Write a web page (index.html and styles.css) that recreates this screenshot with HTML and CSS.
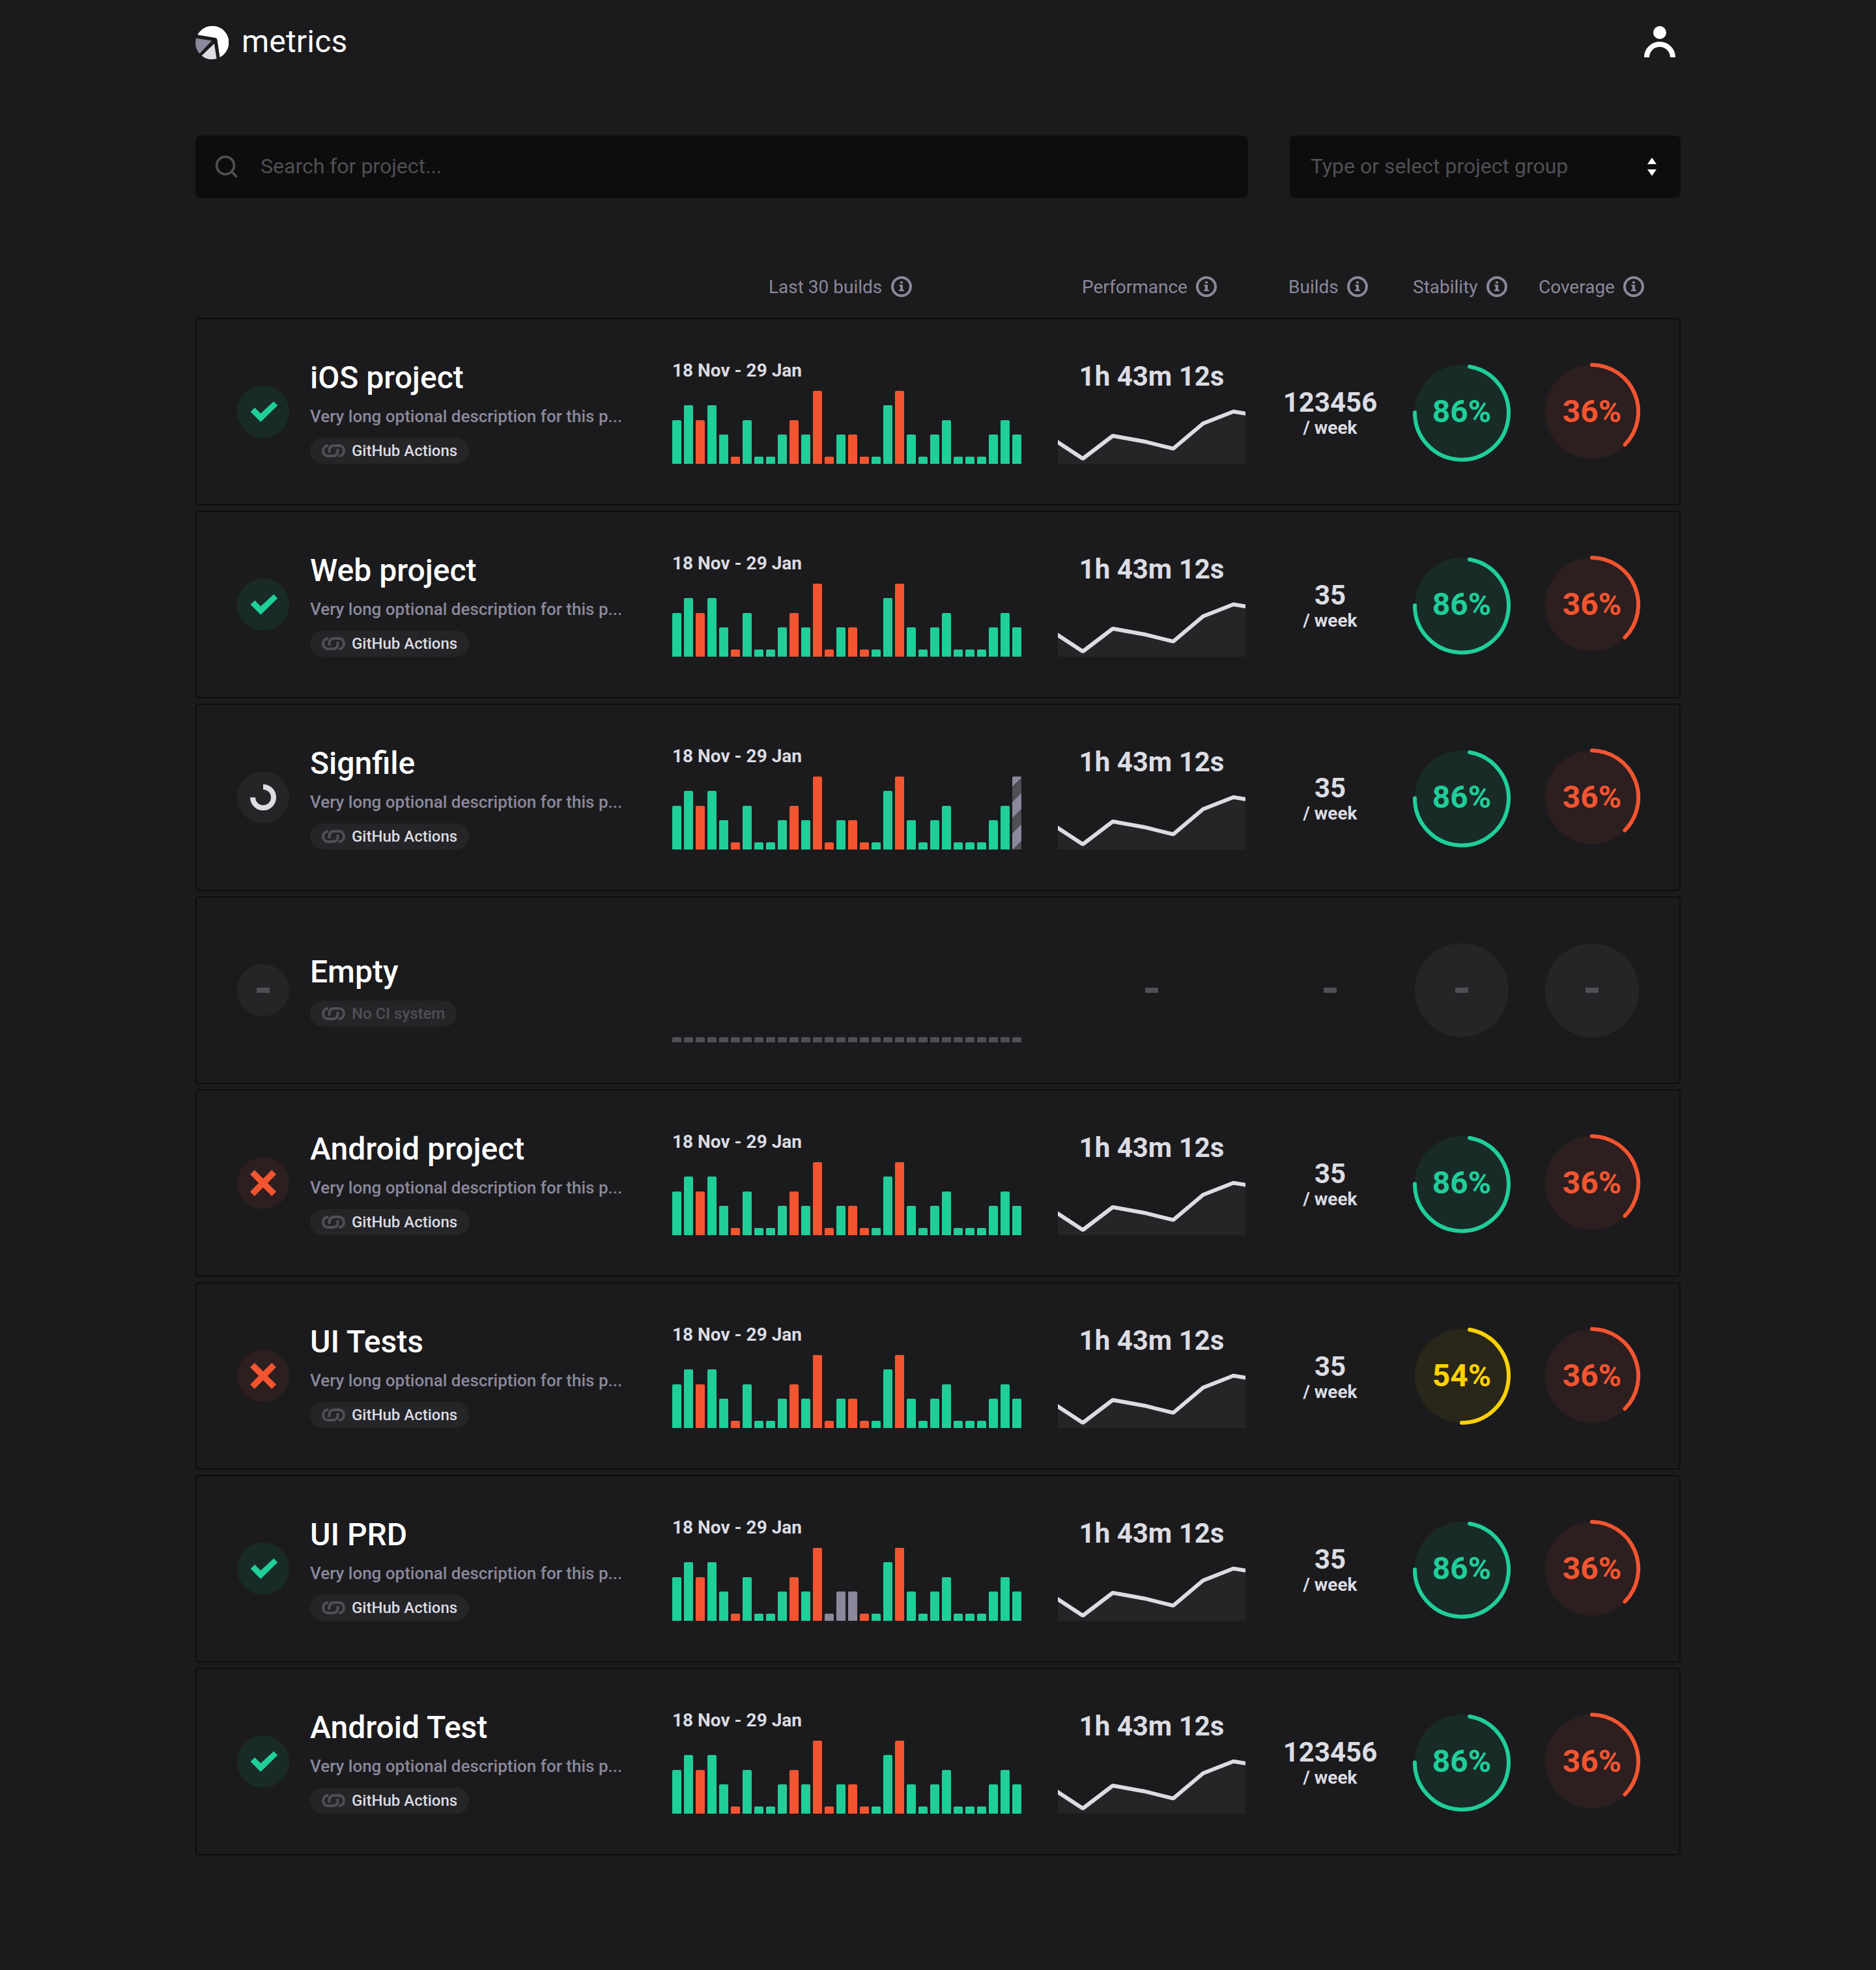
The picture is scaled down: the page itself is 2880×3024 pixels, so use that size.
FILE: index.html
```html
<!DOCTYPE html>
<html lang="en">
<head>
<meta charset="utf-8">
<title>metrics</title>
<link rel="stylesheet" href="styles.css">
</head>
<body>
<svg class="sprite" aria-hidden="true">
  <symbol id="info" viewBox="-16 -16 32 32">
    <circle r="14" fill="none" stroke="currentColor" stroke-width="4"/>
    <path fill="currentColor" d="M-2-8H2V-5H-2ZM-3.6-3H2V4.7H4V7H-4V4.7H-2V-.7H-3.6Z"/>
  </symbol>
  <symbol id="link" viewBox="0 0 36 20">
    <g fill="none" stroke="currentColor" stroke-width="4">
      <path d="M10 2C5 2 2 5.5 2 10S5 18 10 18H16.500C21.500 18 24.500 15.500 24.500 10.500V7"/>
      <path d="M26 18C31 18 34 14.500 34 10S31 2 26 2H19.500C14.500 2 11.500 4.500 11.500 9.500V13"/>
    </g>
  </symbol>
  <symbol id="success" viewBox="0 0 80 80">
    <path fill="currentColor" d="M20.600 40 27.200 33.700 36.200 42.800 56.200 24.300 62.200 30.300 36.200 55.700Z"/>
  </symbol>
  <symbol id="failure" viewBox="0 0 80 80">
    <path fill="none" stroke="currentColor" stroke-width="9.600" d="M23.400 23.400 56.600 56.600M56.600 23.400 23.400 56.600"/>
  </symbol>
  <symbol id="running" viewBox="0 0 80 80">
    <path fill="none" stroke="currentColor" stroke-width="8" d="M40 24A16 16 0 1 1 24 40"/>
  </symbol>
  <symbol id="spark" viewBox="0 0 288 96">
    <path class="spark-area" d="M0 63 38.300 88 84.300 53 132.700 61.700 177 72.700 223 34 269.500 15.700 288 18.700V96H0Z"/>
    <path class="spark-line" d="M-6 59 38.300 88 84.300 53 132.700 61.700 177 72.700 223 34 269.500 15.700 294 19.700"/>
  </symbol>
</svg>

<div class="page">
  <header class="topbar">
    <div class="brand">
      <svg class="logo" viewBox="0 0 51.200 51.200">
        <path fill="#fff" d="M3.300 13.600A25.600 25.600 0 1 1 37.600 48.200L33.600 20.900Q33.200 18.400 30.700 18Z"/>
        <path fill="#8b889b" d="M1.100 18.900 25.200 22.600 6.500 42.500A25.600 25.600 0 0 1 1.100 18.900Z"/>
        <path fill="#dcdce3" d="M29 27 32.600 50.200A25.600 25.600 0 0 1 9.600 45.800Z"/>
      </svg>
      <span class="brand-name">metrics</span>
    </div>
    <svg class="user" viewBox="0 0 48 48">
      <circle cx="24" cy="10" r="10" fill="#fff"/>
      <path d="M4 48A20 20 0 0 1 44 48" fill="none" stroke="#fff" stroke-width="8"/>
    </svg>
  </header>

  <div class="filters">
    <div class="search">
      <svg class="search-icon" viewBox="0 0 36 36">
        <g fill="none" stroke="currentColor" stroke-width="3.800"><circle cx="16" cy="16" r="13.400"/><path d="M25.500 25.500 34 34"/></g>
      </svg>
      <span>Search for project...</span>
    </div>
    <div class="select">
      <span>Type or select project group</span>
      <svg class="arrows" viewBox="0 0 14 28"><path fill="#fff" d="M0 10 7 0 14 10ZM0 18H14L7 28Z"/></svg>
    </div>
  </div>

  <div class="columns">
    <div class="col col-results"><span>Last 30 builds</span><svg><use href="#info"/></svg></div>
    <div class="col col-perf"><span>Performance</span><svg><use href="#info"/></svg></div>
    <div class="col col-builds"><span>Builds</span><svg><use href="#info"/></svg></div>
    <div class="col col-stability"><span>Stability</span><svg><use href="#info"/></svg></div>
    <div class="col col-coverage"><span>Coverage</span><svg><use href="#info"/></svg></div>
  </div>

  <main class="projects" id="projects"></main>
</div>
<script src="app.js"></script>
</body>
</html>
```
FILE: styles.css
```css
* { box-sizing: border-box; }

body {
  margin: 0;
  background: #1b1b1d;
  color: #dcdce3;
  font-family: Roboto, sans-serif;
}

svg { display: block; }
.sprite { position: absolute; width: 0; height: 0; }

.page {
  width: 2280px;
  height: 3024px;
  margin: 0 auto;
  padding-top: 40px;
}

.topbar {
  display: flex;
  justify-content: space-between;
  align-items: flex-start;
  height: 168px;
  padding-right: 8px;
}
.brand { display: flex; gap: 20px; }
.logo { width: 51px; height: 51px; }
.brand-name {
  color: #fff;
  font-size: 48px;
  line-height: 56px;
  letter-spacing: .2px;
  margin-top: -4px;
}
.user { width: 48px; height: 48px; }

.filters {
  display: grid;
  grid-template-columns: 1616px 600px;
  gap: 64px;
  font-size: 32px;
  color: #4f4f55;
}
.search, .select {
  display: flex;
  align-items: center;
  height: 96px;
  padding-bottom: 2px;
  border-radius: 8px;
  background: #0d0d0d;
}
.search { padding-left: 30px; gap: 34px; }
.search-icon { width: 36px; height: 36px; margin-top: 2px; }
.select { justify-content: space-between; padding: 0 37px 2px 32px; }
.arrows { width: 14px; height: 28px; margin-top: 2px; }

.columns {
  display: flex;
  height: 184px;
  padding: 120px 0 0 880px;
  font-size: 28px;
  line-height: 32px;
  color: #8b889b;
}
.col { display: flex; justify-content: space-between; }
.col span { padding-top: 1px; }
.col svg { width: 32px; height: 32px; }
.col-results { width: 220px; margin-right: 261px; }
.col-perf { width: 207px; margin-right: 110px; }
.col-builds { width: 122px; margin-right: 69px; }
.col-stability { width: 145px; margin-right: 48px; }
.col-coverage { width: 162px; }

.projects { display: grid; gap: 8px; }
.project {
  display: grid;
  grid-template-columns: 112px 556px 592px 288px 260px 200px 144px;
  align-items: center;
  height: 288px;
  padding: 0 62px;
  border: 2px solid #0d0d0d;
  border-radius: 5px;
}

.status {
  display: grid;
  place-items: center;
  width: 80px;
  height: 80px;
  border-radius: 50%;
  background: #252528;
}
.status svg { width: 80px; height: 80px; }
.status-success { background: #192b27; color: #20ce9a; }
.status-failure { background: #2d1e1f; color: #f45531; }
.status-running { color: #dcdce3; }

.dash { width: 20px; height: 8px; background: #4f4f55; }

.info {
  display: flex;
  flex-direction: column;
  align-items: flex-start;
  gap: 16px;
  white-space: nowrap;
}
.title {
  margin: 0;
  color: #fff;
  font-size: 48px;
  font-weight: 500;
  line-height: 56px;
}
.description {
  margin: 0;
  padding-bottom: 2px;
  color: #8b889b;
  font-size: 26px;
  font-weight: 500;
  line-height: 30px;
}
.chip {
  display: flex;
  align-items: center;
  gap: 10px;
  height: 40px;
  padding: 0 18px;
  border-radius: 20px;
  background: #252528;
  font-size: 24px;
  font-weight: 500;
}
.chip svg { width: 36px; height: 20px; color: #4f4f55; }
.chip-empty { color: #4f4f55; }

.results, .performance {
  display: flex;
  flex-direction: column;
  justify-content: space-between;
  height: 160px;
}
.range { font-size: 28px; font-weight: 700; line-height: 32px; padding-top: 1px; }
.bars { display: flex; align-items: flex-end; gap: 4px; height: 112px; margin-top: auto; }
.bar { width: 14px; border-radius: 2px 2px 0 0; }
.bar-g { background: #20ce9a; }
.bar-r { background: #f45531; }
.bar-c { background: #8b889b; }
.bar-e { background: #4f4f55; }
.bar-p {
  background: repeating-linear-gradient(135deg, #8b889b 0 10.900px, #4f4f55 10.900px 28px, #8b889b 28px 34.200px);
}

.duration {
  font-size: 42px;
  font-weight: 700;
  line-height: 52px;
  text-align: center;
  white-space: nowrap;
}
.spark { width: 288px; height: 96px; margin-top: auto; }
.spark-area { fill: #252528; }
.spark-line { fill: none; stroke: #dcdce3; stroke-width: 6; stroke-linejoin: bevel; }
.performance .dash, .frequency .dash { margin: auto; }

.frequency { text-align: center; font-weight: 700; }
.count { font-size: 42px; line-height: 47px; padding-top: 3px; }
.unit { font-size: 28px; line-height: 32px; }

.score {
  display: grid;
  place-items: center;
  width: 144px;
  height: 144px;
  border-radius: 50%;
  background: #252528;
  font-size: 48px;
  font-weight: 700;
}
.score > * { grid-area: 1 / 1; }
.score span { padding-bottom: 2px; }
.ring {
  width: 144px;
  height: 144px;
  overflow: visible;
  fill: none;
  stroke: currentColor;
  stroke-width: 6;
  stroke-linecap: round;
}
.score-good { background: #192b27; color: #20ce9a; }
.score-fair { background: #29261a; color: #ffd200; }
.score-bad { background: #2d1e1f; color: #f45531; }
```
FILE: app.js
```js
const LEVELS = { 1: 11.2, 4: 44.8, 6: 67.2, 8: 89.6, 9: 112, 0: 8 };
const BUILDS = 'g6 g8 r6 g8 g4 r1 g6 g1 g1 g4 r6 g4 r9 r1 g4 r4 r1 g1 g8 r9 g4 g1 g4 g6 g1 g1 g1 g4 g6 g4'.split(' ');
const NO_BUILDS = Array(30).fill('e0');

const RINGS = {
  good: 'M12 -69.300A72 72 0 1 1 -72 1.300',
  fair: 'M12 -71A72 72 0 0 1 0 72',
  bad: 'M0 -72A72 72 0 0 1 50.500 50.500'
};

const withBuilds = (changes) => Object.assign([...BUILDS], changes);

const projects = [
  { name: 'iOS project', status: 'success', count: '123456' },
  { name: 'Web project', status: 'success', count: '35' },
  { name: 'Signfile', status: 'running', count: '35', builds: withBuilds({ 29: 'p9' }) },
  { name: 'Empty', empty: true, builds: NO_BUILDS },
  { name: 'Android project', status: 'failure', count: '35' },
  { name: 'UI Tests', status: 'failure', count: '35', stability: ['fair', '54%'] },
  { name: 'UI PRD', status: 'success', count: '35', builds: withBuilds({ 13: 'c1', 14: 'c4', 15: 'c4' }) },
  { name: 'Android Test', status: 'success', count: '123456' }
];

const dash = '<div class="dash"></div>';

const bars = (builds = BUILDS) => `<div class="bars">${builds
  .map(([kind, level]) => `<div class="bar bar-${kind}" style="height:${LEVELS[level]}px"></div>`)
  .join('')}</div>`;

const score = ([kind, value]) => `<div class="score score-${kind}">
  <svg class="ring" viewBox="-72 -72 144 144"><path d="${RINGS[kind]}"/></svg><span>${value}</span></div>`;

const emptyRow = (p) => `<section class="project">
  <div class="status">${dash}</div>
  <div class="info"><h2 class="title">${p.name}</h2>
    <div class="chip chip-empty"><svg><use href="#link"/></svg>No CI system</div></div>
  <div class="results">${bars(p.builds)}</div>
  <div class="performance">${dash}</div>
  <div class="frequency">${dash}</div>
  <div class="score">${dash}</div>
  <div class="score">${dash}</div>
</section>`;

const row = (p) => `<section class="project">
  <div class="status status-${p.status}"><svg><use href="#${p.status}"/></svg></div>
  <div class="info"><h2 class="title">${p.name}</h2>
    <p class="description">Very long optional description for this p...</p>
    <div class="chip"><svg><use href="#link"/></svg>GitHub Actions</div></div>
  <div class="results"><div class="range">18 Nov - 29 Jan</div>${bars(p.builds)}</div>
  <div class="performance"><div class="duration">1h 43m 12s</div><svg class="spark"><use href="#spark"/></svg></div>
  <div class="frequency"><div class="count">${p.count}</div><div class="unit">/ week</div></div>
  ${score(p.stability || ['good', '86%'])}
  ${score(['bad', '36%'])}
</section>`;

document.getElementById('projects').innerHTML = projects
  .map((p) => (p.empty ? emptyRow(p) : row(p)))
  .join('');
```
